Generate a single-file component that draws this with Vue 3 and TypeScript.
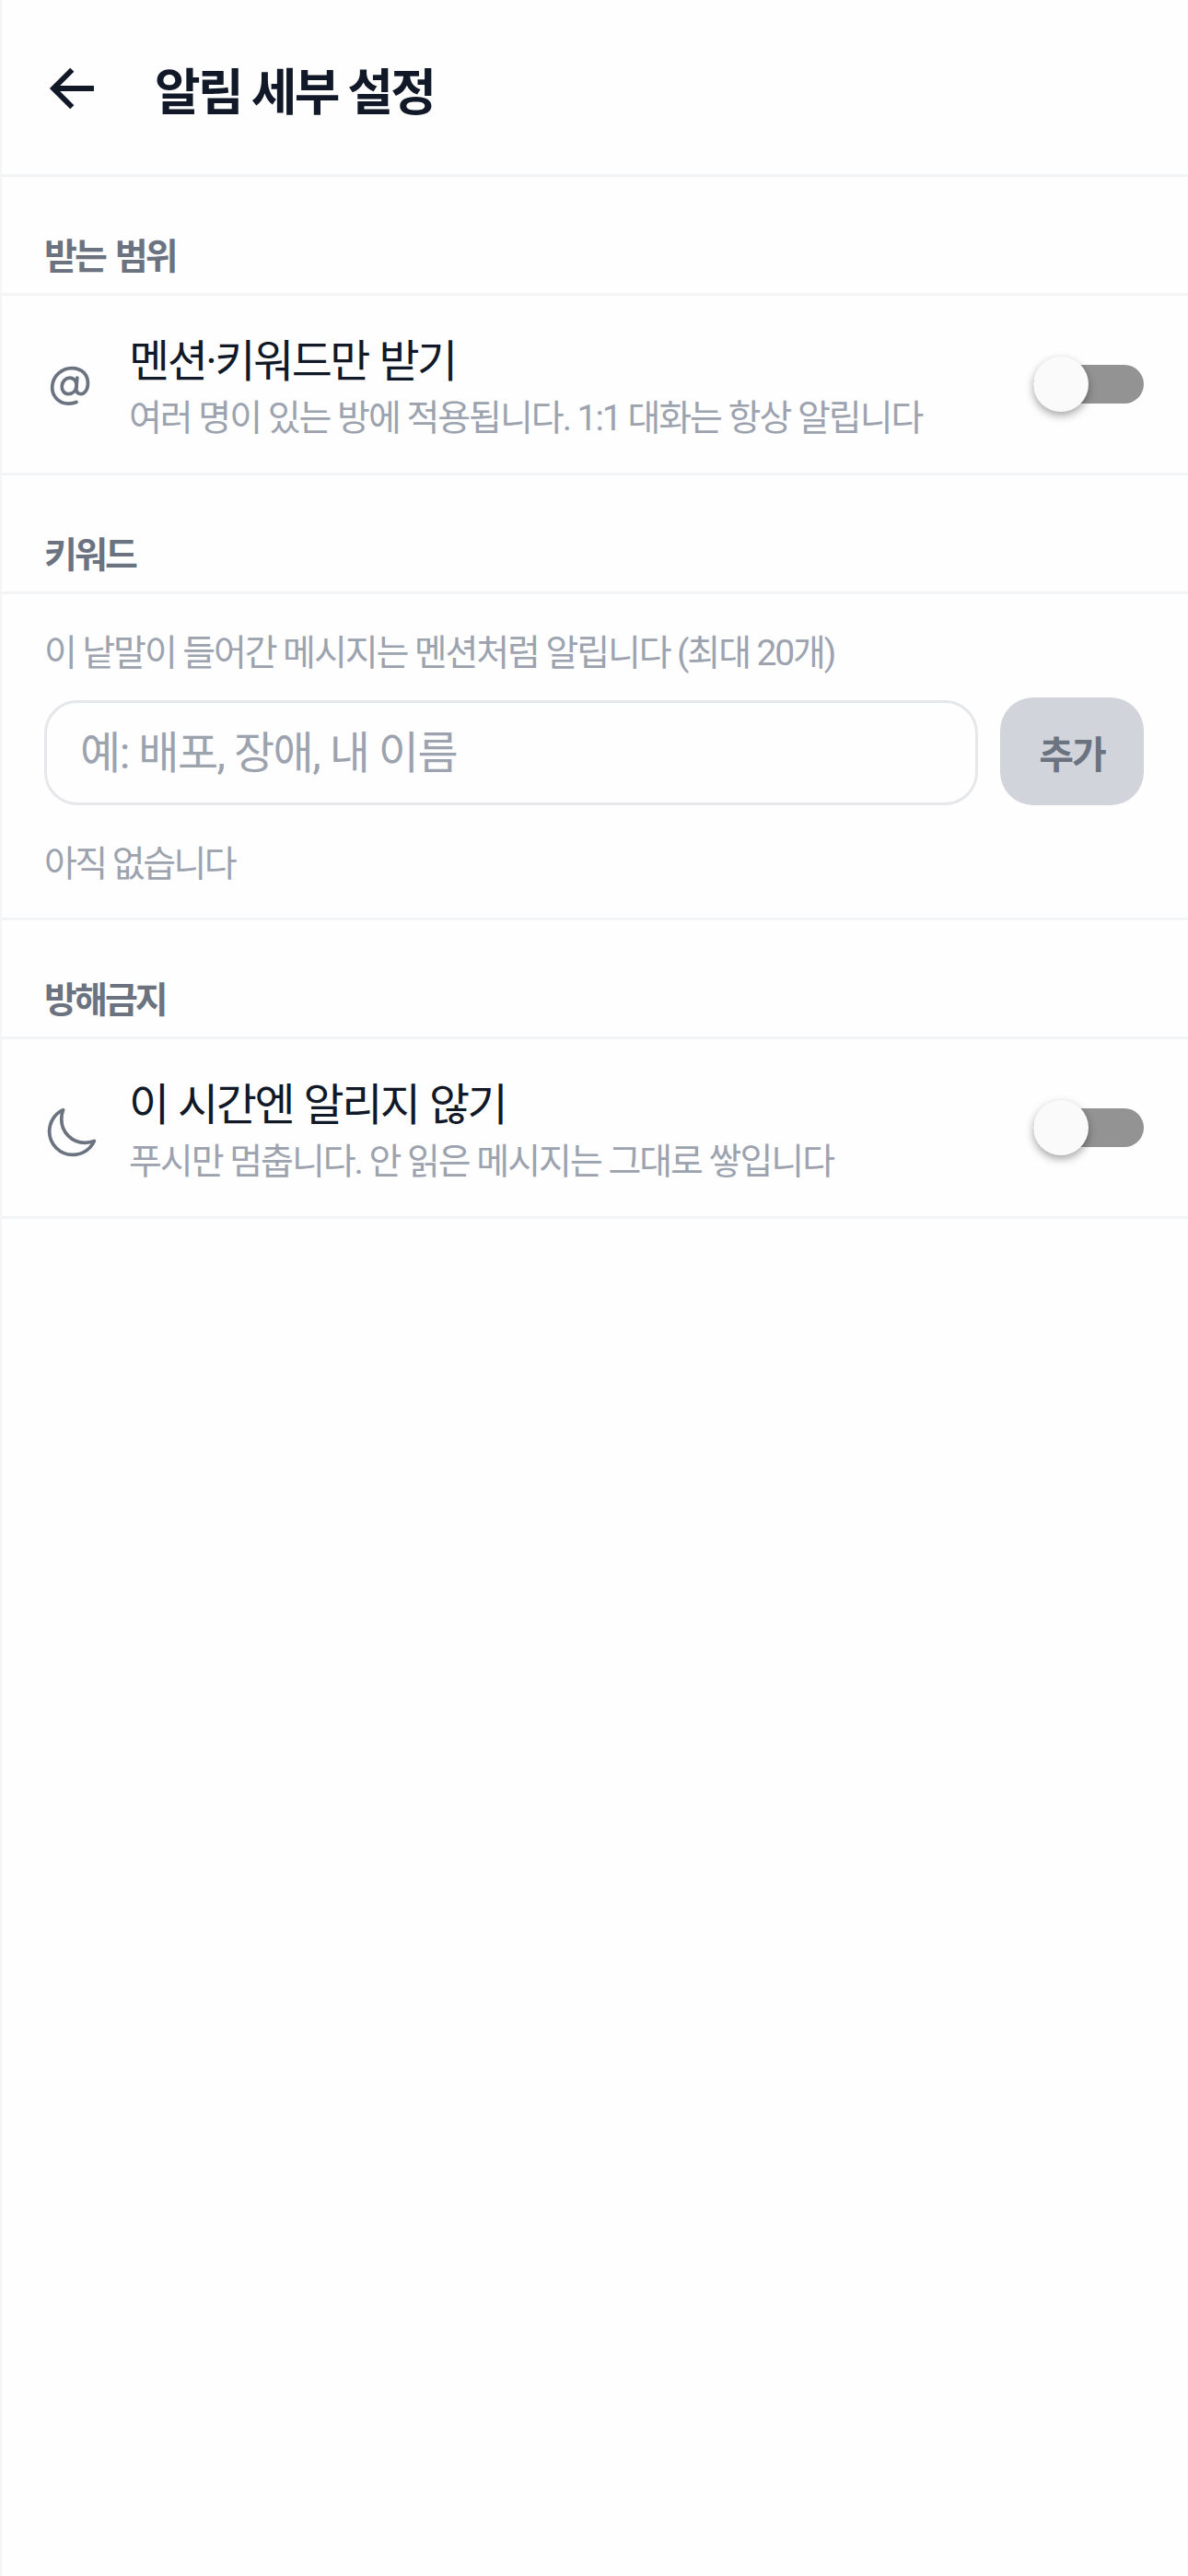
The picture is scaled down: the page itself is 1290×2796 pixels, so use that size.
<script setup lang="ts">
import { ref } from 'vue';

const keyword = ref('');
const mentionOnly = ref(false);
const quiet = ref(false);
</script>

<template>
  <div class="page">
    <header class="top-bar">
      <button class="back" type="button" aria-label="뒤로">
        <svg viewBox="0 0 512 512" class="back__icon">
          <path d="M244 400L100 256l144-144M120 256h292" fill="none" stroke="currentColor" stroke-linecap="butt" stroke-miterlimit="10" stroke-width="42" />
        </svg>
      </button>
      <h1 class="top-bar__title">알림 세부 설정</h1>
    </header>

    <h2 class="section-label">받는 범위</h2>
    <div class="row">
      <svg viewBox="0 0 512 512" class="row__icon row__icon--at">
        <path d="M320 254.27c-4.5 51-40.12 80-80.55 80s-67.34-35.82-63.45-80 37.12-80 77.55-80 70.33 36 66.45 80z" fill="none" stroke="currentColor" stroke-linecap="round" stroke-linejoin="round" stroke-width="34" />
        <path d="M319.77 415.77c-28.56 12-47.28 14.5-79.28 14.5-97.2 0-169-78.8-160.49-176s94.31-176 191.51-176C381 78.27 441.19 150 432.73 246c-6.31 71.67-52.11 92.32-76.09 88.07-22.56-4-41.18-24.42-37.74-63.5l8.48-96.25" fill="none" stroke="currentColor" stroke-linecap="round" stroke-linejoin="round" stroke-width="34" />
      </svg>
      <div class="row__text">
        <div class="row__title">멘션·키워드만 받기</div>
        <div class="row__desc">여러 명이 있는 방에 적용됩니다. 1:1 대화는 항상 알립니다</div>
      </div>
      <button class="switch" type="button" role="switch" :aria-checked="mentionOnly" @click="mentionOnly = !mentionOnly">
        <span class="switch__thumb" :class="{ 'switch__thumb--on': mentionOnly }" />
      </button>
    </div>

    <h2 class="section-label">키워드</h2>
    <div class="keywords">
      <p class="keywords__hint">이 낱말이 들어간 메시지는 멘션처럼 알립니다 (최대 20개)</p>
      <div class="keywords__form">
        <input v-model="keyword" class="keywords__input" type="text" placeholder="예: 배포, 장애, 내 이름" />
        <button class="keywords__add" type="button">추가</button>
      </div>
      <p class="keywords__empty">아직 없습니다</p>
    </div>

    <h2 class="section-label">방해금지</h2>
    <div class="row">
      <svg viewBox="0 0 512 512" class="row__icon">
        <path d="M160 136c0-30.62 4.51-61.61 16-88C99.57 81.27 48 159.32 48 248c0 119.29 96.71 216 216 216 88.68 0 166.73-51.57 200-128-26.39 11.49-57.38 16-88 16-119.29 0-216-96.71-216-216z" fill="none" stroke="currentColor" stroke-linecap="round" stroke-linejoin="round" stroke-width="32" />
      </svg>
      <div class="row__text">
        <div class="row__title">이 시간엔 알리지 않기</div>
        <div class="row__desc">푸시만 멈춥니다. 안 읽은 메시지는 그대로 쌓입니다</div>
      </div>
      <button class="switch" type="button" role="switch" :aria-checked="quiet" @click="quiet = !quiet">
        <span class="switch__thumb" :class="{ 'switch__thumb--on': quiet }" />
      </button>
    </div>
  </div>
</template>

<style>
html, body { margin: 0; background: #fefefe; }
</style>

<style scoped>
.page {
  box-sizing: border-box;
  width: 1290px;
  min-height: 2796px;
  background: #fefefe;
  border-left: 2px solid #f5f5f6;
  font-family: Roboto, "Noto Sans CJK KR", sans-serif;
}

.top-bar {
  display: flex;
  align-items: center;
  box-sizing: border-box;
  height: 192px;
  padding: 3px 34px 0 42px;
  border-bottom: 3px solid #f3f4f6;
}
.back {
  display: flex;
  padding: 0;
  margin-right: 52px;
  border: 0;
  background: none;
  color: #111827;
}
.back__icon { width: 72px; height: 72px; }
.top-bar__title {
  margin: 12px 0 0;
  font-size: 54px;
  font-weight: 700;
  line-height: 72px;
  letter-spacing: -0.05em;
  color: #111827;
}

.section-label {
  margin: 0;
  padding: 60px 46px 12px;
  font-size: 39px;
  font-weight: 700;
  line-height: 54px;
  letter-spacing: -0.075em;
  word-spacing: 4px;
  color: #6b7280;
  border-bottom: 3px solid #f3f4f6;
}

.row {
  display: flex;
  align-items: center;
  box-sizing: border-box;
  height: 195px;
  padding: 0 48px 0 46px;
  border-bottom: 3px solid #f3f4f6;
}
.row__icon { flex: none; width: 60px; height: 60px; margin: 10px 32px 0 0; color: #6b7280; }
.row__icon--at { width: 56px; height: 56px; margin: 4px 36px 0 0; }
.row__text { flex: 1; min-width: 0; padding-top: 10px; }
.row__title { font-size: 48px; line-height: 64px; letter-spacing: -0.052em; word-spacing: 2px; color: #111827; }
.row__desc { font-size: 39px; line-height: 58px; letter-spacing: -0.052em; color: #9ca3af; }

.switch {
  position: relative;
  flex: none;
  width: 120px;
  height: 42px;
  padding: 0;
  border: 0;
  border-radius: 21px;
  background: #939393;
}
.switch__thumb {
  position: absolute;
  top: -9px;
  left: 0;
  width: 60px;
  height: 60px;
  border-radius: 50%;
  background: #fafafa;
  box-shadow: 0 4px 10px rgba(0, 0, 0, 0.35);
}
.switch__thumb--on { left: 60px; }

.keywords {
  padding: 37px 48px 34px 46px;
  border-bottom: 3px solid #f3f4f6;
}
.keywords__hint { margin: 0; font-size: 39px; line-height: 54px; letter-spacing: -0.054em; color: #9ca3af; }
.keywords__form { display: flex; gap: 24px; margin-top: 21px; }
.keywords__input {
  flex: 1;
  min-width: 0;
  box-sizing: border-box;
  height: 114px;
  margin-top: 3px;
  padding: 0 36px;
  border: 3px solid #e5e7eb;
  border-radius: 36px;
  background: #fefefe;
  font-family: inherit;
  font-size: 48px;
  letter-spacing: -0.031em;
  color: #111827;
  outline: none;
}
.keywords__input::placeholder { color: #9ca3af; opacity: 1; }
.keywords__add {
  flex: none;
  width: 156px;
  height: 117px;
  padding: 0;
  border: 0;
  border-radius: 36px;
  background: #d1d5db;
  font-family: inherit;
  font-size: 41px;
  font-weight: 700;
  letter-spacing: -0.05em;
  color: #6b7280;
}
.keywords__empty { margin: 40px 0 0; font-size: 39px; line-height: 48px; letter-spacing: -0.065em; color: #9ca3af; }
</style>
